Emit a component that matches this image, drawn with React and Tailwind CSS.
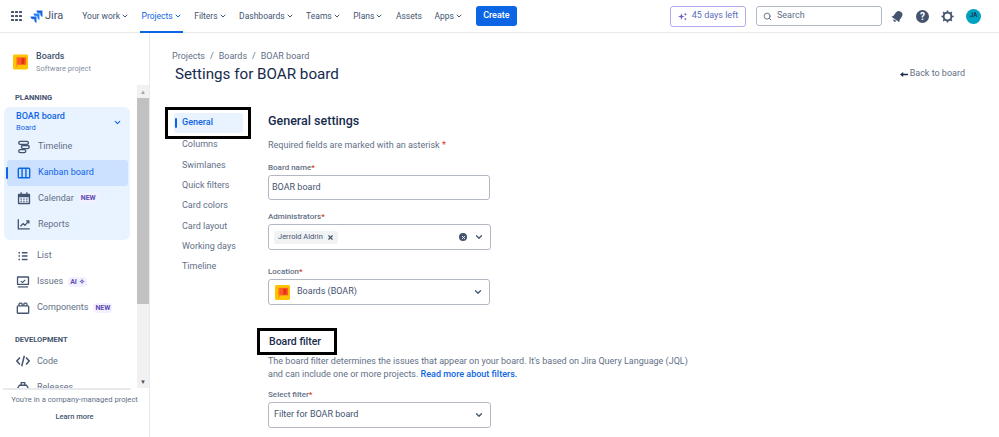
import { ChevronDown, X, Search } from "lucide-react";

const navItems = ["Your work", "Projects", "Filters", "Dashboards", "Teams", "Plans", "Assets", "Apps"];
const settingsItems = ["Columns", "Swimlanes", "Quick filters", "Card colors", "Card layout", "Working days", "Timeline"];

const BoardsLogo = ({ className }) => (
  <svg viewBox="0 0 16 16" className={className}>
    <rect width="16" height="16" rx="1.5" fill="#ffc400" />
    <rect x="4" y="3" width="10" height="8" fill="#ff5630" />
    <rect x="9" y="4" width="3" height="6" fill="#de350b" />
    <rect x="3.5" y="3" width="1.2" height="10.5" fill="#ff8b00" />
  </svg>
);

const JiraLogo = () => (
  <svg viewBox="0 0 24 24" className="w-[13px] h-[13px]">
    <path d="M23 1H12a5 5 0 0 0 5 5h2v2a5 5 0 0 0 4 4.900z" fill="#1868db" />
    <path d="M17.500 6.500h-11a5 5 0 0 0 5 5h2v2a5 5 0 0 0 4 4.900z" fill="#2684ff" />
    <path d="M12 12H1a5 5 0 0 0 5 5h2v2a5 5 0 0 0 4 4.900z" fill="#1868db" />
  </svg>
);

const icon = "fill-none stroke-current";

const TimelineIcon = () => (
  <svg viewBox="0 0 16 16" className={`w-[14px] h-[14px] ${icon}`} strokeWidth="1.500">
    <rect x="2" y="1.500" width="11" height="3.500" rx="1.700" />
    <rect x="5" y="6.300" width="9" height="3.500" rx="1.700" />
    <rect x="2" y="11" width="8" height="3.500" rx="1.700" />
  </svg>
);
const KanbanIcon = () => (
  <svg viewBox="0 0 16 16" className={`w-[14px] h-[14px] ${icon}`} strokeWidth="1.600">
    <rect x="1.500" y="2.500" width="13" height="11" rx="1" />
    <path d="M5.800 2.500v11M10.200 2.500v11" />
  </svg>
);
const CalendarIcon = () => (
  <svg viewBox="0 0 16 16" className="w-[14px] h-[14px] text-current">
    <path d="M2 3h12a1 1 0 0 1 1 1v10a1 1 0 0 1-1 1H2a1 1 0 0 1-1-1V4a1 1 0 0 1 1-1zm.500 4v6.500h11V7z" fill="currentColor" fillRule="evenodd" />
    <path d="M4 1.500h1.500V4H4zM10.500 1.500H12V4h-1.500zM4 8.500h1.500V10H4zM7.200 8.500h1.500V10H7.200zM10.500 8.500H12V10h-1.500zM4 11h1.500v1.500H4zM7.200 11h1.500v1.500H7.200zM10.500 11H12v1.500h-1.500z" fill="currentColor" />
  </svg>
);
const ReportsIcon = () => (
  <svg viewBox="0 0 16 16" className={`w-[14px] h-[14px] ${icon}`} strokeWidth="1.500">
    <path d="M1.500 2.500v11h13" />
    <path d="M4 10.500l3-3 2 2 4-4.500M10.500 4.500H13.500V7.500" />
  </svg>
);
const ListIcon = () => (
  <svg viewBox="0 0 16 16" className={`w-[12px] h-[12px] ${icon}`} strokeWidth="2">
    <path d="M2 3.500h2M2 8h2M2 12.500h2M6.500 3.500H14M6.500 8H14M6.500 12.500H14" />
  </svg>
);
const IssuesIcon = () => (
  <svg viewBox="0 0 16 16" className="w-[14px] h-[14px]">
    <path d="M2 1.500h12a1 1 0 0 1 1 1v8a1 1 0 0 1-1 1H2a1 1 0 0 1-1-1v-8a1 1 0 0 1 1-1zm.500 1.500v7h11V3z" fill="currentColor" fillRule="evenodd" />
    <path d="M5.500 7l2 1.500 3-3" className={icon} strokeWidth="1.300" />
    <rect x="2" y="12.500" width="12" height="2" rx="0.500" fill="currentColor" opacity="0.7" />
  </svg>
);
const ComponentsIcon = () => (
  <svg viewBox="0 0 16 16" className={`w-[14px] h-[14px] ${icon}`} strokeWidth="1.500">
    <rect x="1.500" y="5.500" width="13" height="8.500" rx="1" />
    <path d="M3.500 5.500V3.500a1 1 0 0 1 1-1h1.500a1 1 0 0 1 1 1v2M9 5.500V3.500a1 1 0 0 1 1-1h1.500a1 1 0 0 1 1 1v2" />
  </svg>
);
const CodeIcon = () => (
  <svg viewBox="0 0 16 16" className={`w-[14px] h-[14px] ${icon}`} strokeWidth="1.700">
    <path d="M4.500 4L1 8l3.500 4M11.500 4L15 8l-3.500 4M9.500 2L6.500 14" />
  </svg>
);
const ReleasesIcon = () => (
  <svg viewBox="0 0 16 16" className={`w-[14px] h-[14px] ${icon}`} strokeWidth="1.500">
    <path d="M1 11l3-5h8l3 5v3H1zM6 6V3h4v3" />
  </svg>
);

const Tag = ({ children }) => (
  <span className="text-[7px] font-bold text-[#5e4db2] bg-[#f3f0ff] px-[2px] py-[1px] leading-[8px] rounded-sm">{children}</span>
);

const SideRow = ({ icon, label, tag, active }) => (
  <div
    className={`relative flex items-center h-[25.800px] rounded-[3px] text-[9px] ${
      active ? "bg-[#cce0ff] text-[#0c66e4]" : "text-[#626f86]"
    }`}
  >
    {active && <span className="absolute left-[-1px] top-[7px] w-[2px] h-[12px] bg-[#0c66e4] rounded" />}
    <span className={`w-[31px] flex justify-center pl-[3px] ${active ? "text-[#0c66e4]" : "text-[#44546f]"}`}>{icon}</span>
    <span className="whitespace-nowrap">{label}</span>
    {tag && <span className="ml-[5px] flex"><Tag>{tag}</Tag></span>}
  </div>
);

const Label = ({ children }) => (
  <div className="text-[8px] font-medium text-[#626f86] leading-[10px] mb-[2px]">
    {children}
    <span className="text-[#de350b]">*</span>
  </div>
);

const Chevron = () => <ChevronDown size={10} strokeWidth={3} className="text-[#44546f]" />;

export default function App() {
  return (
    <div className="w-[999px] h-[437px] overflow-hidden bg-white flex flex-col font-['Roboto',sans-serif] text-[#44546f]">
      {/* Top nav */}
      <header className="h-[33px] shrink-0 border-b border-[#e8eaee] flex items-center relative">
        <div className="grid grid-cols-3 gap-[1.500px] ml-[11px] w-[11px]">
          {Array.from({ length: 9 }).map((_, i) => (
            <span key={i} className="w-[2.500px] h-[2.500px] bg-[#44546f] rounded-[0.5px]" />
          ))}
        </div>
        <div className="ml-[8px] flex items-center gap-[2px]">
          <JiraLogo />
          <span className="text-[11px] text-[#44546f]">Jira</span>
        </div>
        <nav className="flex items-center gap-[12.500px] ml-[19px] h-full text-[8.500px]">
          {navItems.map((item) => {
            const active = item === "Projects";
            return (
              <div key={item} className={`relative h-full flex items-center whitespace-nowrap ${active ? "text-[#0c66e4]" : ""}`}>
                {item}
                {item !== "Assets" && <ChevronDown size={8} strokeWidth={3} className="ml-[1px]" />}
                {active && <span className="absolute -left-[2px] -right-[1px] bottom-[-1px] h-[2px] bg-[#0c66e4]" />}
              </div>
            );
          })}
        </nav>
        <button className="ml-[13px] bg-[#0c66e4] text-white text-[9px] font-medium rounded-[3px] w-[41px] h-[20px]">Create</button>
        <div className="ml-auto flex items-center">
          <div className="h-[21px] w-[76px] border border-[#b8a8f0] rounded-[3px] flex items-center justify-center gap-[5px] text-[9px] text-[#5b6fb8]">
            <svg viewBox="0 0 16 16" className="w-[9px] h-[9px] fill-[#6e5dc6]">
              <path d="M6 2l1.500 4.500L12 8l-4.500 1.500L6 14 4.500 9.500 0 8l4.500-1.500zM13 1l.800 2.200L16 4l-2.200.800L13 7l-.800-2.200L10 4l2.200-.800zM13 10l.800 1.500L15.500 12.500l-1.700.800L13 15l-.800-1.700-1.500-.800 1.500-1z" />
            </svg>
            45 days left
          </div>
          <div className="ml-[10px] h-[20px] w-[126px] border border-[#b3b9c4] rounded-[3px] flex items-center pl-[6px] gap-[5px] text-[9px] text-[#626f86]">
            <Search size={9} strokeWidth={2.500} />
            Search
          </div>
          <svg viewBox="0 0 16 16" className="ml-[9px] w-[13px] h-[13px] fill-[#44546f] rotate-[35deg]">
            <path d="M8 1a4.500 4.500 0 0 1 4.500 4.500V10l1.500 2.500H2L3.500 10V5.500A4.500 4.500 0 0 1 8 1zM6 13.500h4a2 2 0 0 1-4 0z" />
          </svg>
          <span className="ml-[12px] w-[13px] h-[13px] rounded-full bg-[#44546f] text-white text-[10px] font-bold flex items-center justify-center">?</span>
          <svg viewBox="0 0 16 16" className="ml-[12px] w-[13px] h-[13px] fill-none stroke-[#44546f]" strokeWidth="2.400">
            <circle cx="8" cy="8" r="4.800" />
            <path d="M8 0.500v2M8 13.500v2M0.500 8h2M13.500 8h2M2.700 2.700l1.400 1.400M11.900 11.900l1.400 1.400M2.700 13.300l1.400-1.400M11.900 4.100l1.400-1.400" strokeWidth="2" />
          </svg>
          <span className="ml-[12px] mr-[18px] w-[15px] h-[15px] rounded-full bg-[#00a3bf] text-[#172b4d] text-[6.500px] font-medium flex items-center justify-center">JA</span>
        </div>
      </header>

      <div className="flex flex-1 min-h-0">
        {/* Project sidebar */}
        <aside className="w-[150px] shrink-0 border-r border-[#e8eaee] flex flex-col relative">
          <div className="flex items-center h-[52px] pl-[13px] gap-[8px] pt-[6px]">
            <BoardsLogo className="w-[15px] h-[16px]" />
            <div>
              <div className="text-[9px] font-medium text-[#44546f] leading-[11px]">Boards</div>
              <div className="text-[7.500px] text-[#8590a2] leading-[11px] mt-[1px]">Software project</div>
            </div>
          </div>
          <div className="flex flex-1 min-h-0">
            <div className="flex-1 min-w-0 overflow-hidden pl-[4px] pr-[7px]">
              <div className="text-[7.500px] font-bold text-[#44546f] pl-[11px] leading-[10px] mt-[8px] mb-[4px]">PLANNING</div>
              <div className="bg-[#e9f2ff] rounded-[6px] pl-[3px] pr-[2px] pb-[3px]">
                <div className="flex items-center justify-between pl-[9px] pr-[6px] pt-[3px]">
                  <div>
                    <div className="text-[9px] font-medium text-[#0c66e4] leading-[12px]">BOAR board</div>
                    <div className="text-[7.500px] text-[#0c66e4] leading-[12px]">Board</div>
                  </div>
                  <ChevronDown size={9} strokeWidth={3} className="text-[#0c66e4]" />
                </div>
                <SideRow label="Timeline" icon={<TimelineIcon />} />
                <SideRow label="Kanban board" active icon={<KanbanIcon />} />
                <SideRow label="Calendar" tag="NEW" icon={<CalendarIcon />} />
                <SideRow label="Reports" icon={<ReportsIcon />} />
              </div>
              <div className="mt-[3px] pl-[2px]">
                <SideRow label="List" icon={<ListIcon />} />
                <SideRow label="Issues" tag="AI ✧" icon={<IssuesIcon />} />
                <SideRow label="Components" tag="NEW" icon={<ComponentsIcon />} />
              </div>
              <div className="text-[7.500px] font-bold text-[#44546f] pl-[11px] leading-[10px] mt-[14px] mb-[4px]">DEVELOPMENT</div>
              <div className="pl-[2px]">
                <SideRow label="Code" icon={<CodeIcon />} />
                <SideRow label="Releases" icon={<ReleasesIcon />} />
              </div>
            </div>
            {/* scrollbar */}
            <div className="w-[12px] shrink-0 bg-[#f1f1f1] flex flex-col h-[303px]">
              <div className="h-[13px] flex items-center justify-center text-[#a3a3a3] text-[6px] leading-none">▲</div>
              <div className="h-[206px] bg-[#c1c1c1]" />
              <div className="flex-1" />
              <div className="h-[13px] flex items-center justify-center text-[#505050] text-[6px] leading-none">▼</div>
            </div>
          </div>
          <div className="absolute left-0 bottom-0 w-[149px] h-[49px] bg-white text-center">
            <div className="h-[2px] w-[128px] ml-[3px] bg-[#e8eaee]" />
            <div className="text-[7.600px] text-[#626f86] leading-[10px] mt-[5px]">You're in a company-managed project</div>
            <div className="text-[7.500px] font-medium text-[#44546f] leading-[10px] mt-[7px]">Learn more</div>
          </div>
        </aside>

        {/* Main */}
        <main className="flex-1 min-w-0 pl-[22px] pr-[34px]">
          <div className="text-[9px] text-[#626f86] mt-[17px] leading-[12px] flex gap-[5px]">
            <span>Projects</span><span>/</span><span>Boards</span><span>/</span><span>BOAR board</span>
          </div>
          <div className="flex items-center justify-between mt-[2px] pl-[3px]">
            <h1 className="text-[15.200px] text-[#172b4d] leading-[20px]">Settings for BOAR board</h1>
            <div className="flex items-center text-[9px] text-[#626f86]">
              <svg viewBox="0 0 10 8" className="w-[8px] h-[7px] mr-[2px] fill-[#172b4d]">
                <path d="M0 4l4-3v2h6v2H4v2z" />
              </svg>
              Back to board
            </div>
          </div>

          <div className="flex mt-[23px]">
            {/* Settings nav */}
            <div className="w-[103px] shrink-0 -ml-[7px] text-[9px] text-[#626f86]">
              <div className="w-[86px] h-[32px] border-[3px] border-black flex items-center pl-[6px] pr-[5px] bg-white">
                <span className="flex-1 h-[20px] bg-[#e9f2ff] rounded-[3px] flex items-center pl-[1px] text-[#0c66e4] font-medium">
                  <span className="w-[2px] h-[10px] bg-[#0c66e4] rounded mr-[5px]" />
                  General
                </span>
              </div>
              <div className="pl-[17px] -mt-[4px] flex flex-col">
                {settingsItems.map((item) => (
                  <div key={item} className="h-[20.300px] flex items-center">{item}</div>
                ))}
              </div>
            </div>

            {/* Form */}
            <div className="flex-1 min-w-0">
              <h2 className="text-[12.500px] font-medium text-[#172b4d] leading-[16px] mt-[6px]">General settings</h2>
              <p className="text-[9px] text-[#626f86] leading-[12px] mt-[10px]">
                Required fields are marked with an asterisk <span className="text-[#de350b]">*</span>
              </p>
              <div className="mt-[12px]"><Label>Board name</Label></div>
              <div className="w-[222px] h-[25px] border border-[#b3b9c4] rounded-[3px] flex items-center pl-[3px] text-[9px]">BOAR board</div>

              <div className="mt-[12px]"><Label>Administrators</Label></div>
              <div className="w-[223px] h-[26px] border border-[#b3b9c4] rounded-[3px] flex items-center pl-[5px] pr-[6px]">
                <span className="bg-[#f1f2f4] text-[7.500px] h-[13px] flex items-center px-[4px] gap-[4px] rounded-[2px]">
                  Jerrold Aldrin <X size={7} strokeWidth={4} />
                </span>
                <span className="ml-auto w-[8px] h-[8px] rounded-full bg-[#44546f] text-white flex items-center justify-center">
                  <X size={5} strokeWidth={4} />
                </span>
                <span className="ml-[7px]"><Chevron /></span>
              </div>

              <div className="mt-[17px]"><Label>Location</Label></div>
              <div className="w-[222px] h-[26px] border border-[#b3b9c4] rounded-[3px] flex items-center pl-[6px] pr-[6px] text-[9px]">
                <BoardsLogo className="w-[15px] h-[15px]" />
                <span className="ml-[7px]">Boards (BOAR)</span>
                <span className="ml-auto"><Chevron /></span>
              </div>

              <div className="mt-[23px] -ml-[11px] w-[80px] h-[27px] border-[3px] border-black flex items-center pl-[9px] text-[10.500px] font-medium text-[#172b4d]">Board filter</div>
              <p className="text-[9px] text-[#626f86] leading-[13px] w-[430px]">
                The board filter determines the issues that appear on your board. It's based on Jira Query Language (JQL)<br />
                and can include one or more projects. <span className="text-[#0c66e4] font-medium">Read more about filters.</span>
              </p>
              <div className="mt-[9px]"><Label>Select filter</Label></div>
              <div className="w-[223px] h-[26px] border border-[#b3b9c4] rounded-[3px] flex items-center pl-[5px] pr-[6px] text-[9px]">
                Filter for BOAR board
                <span className="ml-auto"><Chevron /></span>
              </div>
            </div>
          </div>
        </main>
      </div>
    </div>
  );
}
